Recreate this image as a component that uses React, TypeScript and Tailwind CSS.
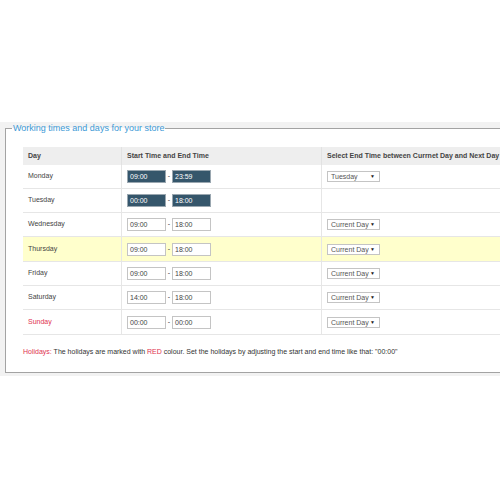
import React from "react";

interface DiaTrabalho {
  nome: string;
  inicio: string;
  fim: string;
  fimDia?: string;
  selecionado?: boolean;
  destaque?: boolean;
  feriado?: boolean;
  alto?: boolean;
}

const dias: DiaTrabalho[] = [
  { nome: "Monday", inicio: "09:00", fim: "23:59", fimDia: "Tuesday", selecionado: true },
  { nome: "Tuesday", inicio: "00:00", fim: "18:00", selecionado: true },
  { nome: "Wednesday", inicio: "09:00", fim: "18:00", fimDia: "Current Day" },
  { nome: "Thursday", inicio: "09:00", fim: "18:00", fimDia: "Current Day", destaque: true, alto: true },
  { nome: "Friday", inicio: "09:00", fim: "18:00", fimDia: "Current Day" },
  { nome: "Saturday", inicio: "14:00", fim: "18:00", fimDia: "Current Day" },
  { nome: "Sunday", inicio: "00:00", fim: "00:00", fimDia: "Current Day", feriado: true, alto: true },
];

function CampoHora({ valor, selecionado }: { valor: string; selecionado?: boolean }) {
  return (
    <div
      className={`flex h-[13px] w-[39px] items-center border pl-[2px] text-[7px] leading-none ${
        selecionado
          ? "border-[#9aa7b0] bg-[#35566b] text-white"
          : "border-[#c4c4c4] bg-white text-[#444]"
      }`}
    >
      {valor}
    </div>
  );
}

function SeletorDia({ valor }: { valor: string }) {
  return (
    <div className="flex h-[11px] w-[53px] items-center justify-between border border-[#c4c4c4] bg-white pl-[3px] pr-[4px] text-[7px] leading-none text-[#555]">
      <span>{valor}</span>
      <span className="text-[5px] text-[#222]">▼</span>
    </div>
  );
}

export default function App() {
  return (
    <div
      className="h-[500px] w-[500px] overflow-hidden bg-white"
      style={{ fontFamily: '"Liberation Sans", Arial, sans-serif' }}
    >
      <div className="h-[122px]" />
      <div className="h-[254px] bg-[#f2f2f2] pl-[5px] pt-px">
        <fieldset className="h-[250px] w-[520px] border border-[#a3a3a3] bg-white pl-[17px] pt-[13px]">
          <legend className="-ml-[11px] px-px text-[9px] leading-[11px] text-[#3d9ad6]">
            Working times and days for your store
          </legend>

          <div className="w-[490px] text-[7px] text-[#444]">
            <div className="flex h-[18px] bg-[#eeeeee] font-bold text-[#444]">
              <div className="flex w-[99px] items-center border-r border-[#e2e2e2] pl-[5px]">Day</div>
              <div className="flex w-[200px] items-center border-r border-[#e2e2e2] pl-[5px]">
                Start Time and End Time
              </div>
              <div className="flex flex-1 items-center pl-[5px]">
                Select End Time between Currnet Day and Next Day
              </div>
            </div>

            {dias.map((dia) => (
              <div
                className={`flex border-b border-[#e6e6e6] ${dia.alto ? "h-[25px]" : "h-[24px]"} ${
                  dia.destaque ? "bg-[#ffffcc]" : "bg-white"
                }`}
                key={dia.nome}
              >
                <div
                  className={`flex w-[99px] items-center border-r border-[#e6e6e6] pl-[5px] ${
                    dia.feriado ? "text-[#e0334f]" : ""
                  }`}
                >
                  {dia.nome}
                </div>
                <div className="flex w-[200px] items-center border-r border-[#e6e6e6] pl-[5px]">
                  <CampoHora selecionado={dia.selecionado} valor={dia.inicio} />
                  <span className="w-[6px] text-center text-[#333]">-</span>
                  <CampoHora selecionado={dia.selecionado} valor={dia.fim} />
                </div>
                <div className="flex flex-1 items-center pl-[5px]">
                  {dia.fimDia ? <SeletorDia valor={dia.fimDia} /> : null}
                </div>
              </div>
            ))}

            <p className="mt-[12px] text-[7px] leading-[10px] text-[#333]">
              <span className="text-[#e0334f]">Holidays:</span> The holidays are marked with{" "}
              <span className="text-[#e0334f]">RED</span> colour. Set the holidays by adjusting the
              start and end time like that: "00:00"
            </p>
          </div>
        </fieldset>
      </div>
    </div>
  );
}
